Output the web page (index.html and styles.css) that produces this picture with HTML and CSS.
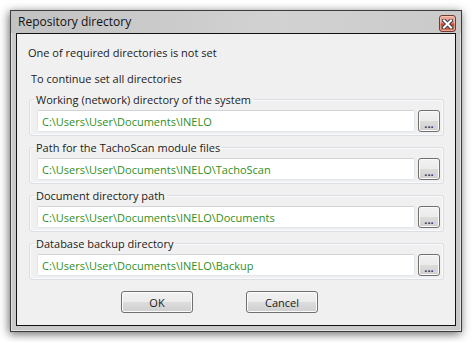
FILE: index.html
```html
<!DOCTYPE html>
<html lang="en">

<head>
    <meta charset="UTF-8" />
    <meta name="viewport" content="width=device-width, initial-scale=1.0" />
    <title>Repository directory</title>
    <link rel="stylesheet" href="styles.css">
</head>

<body>
    <!-- Dialog window -->
    <div class="window">
        <div class="titlebar">
            <span class="title">Repository directory</span>
            <button class="close" title="Close">
                <svg width="11" height="10" viewBox="0 0 11 10">
                    <path d="M2 1.5 L9 8.5 M9 1.5 L2 8.5" stroke="#3b3b4a" stroke-width="4" stroke-linecap="square" />
                    <path d="M2 1.5 L9 8.5 M9 1.5 L2 8.5" stroke="#ffffff" stroke-width="2" stroke-linecap="square" />
                </svg>
            </button>
        </div>

        <div class="client">
            <p class="msg">One of required directories is not set</p>
            <p class="hint">To continue set all directories</p>

            <fieldset class="group">
                <legend>Working (network) directory of the system</legend>
                <div class="row">
                    <input class="path" type="text" value="C:\Users\User\Documents\INELO" />
                    <button class="browse">...</button>
                </div>
            </fieldset>

            <fieldset class="group">
                <legend>Path for the TachoScan module files</legend>
                <div class="row">
                    <input class="path" type="text" value="C:\Users\User\Documents\INELO\TachoScan" />
                    <button class="browse">...</button>
                </div>
            </fieldset>

            <fieldset class="group">
                <legend>Document directory path</legend>
                <div class="row">
                    <input class="path" type="text" value="C:\Users\User\Documents\INELO\Documents" />
                    <button class="browse">...</button>
                </div>
            </fieldset>

            <fieldset class="group">
                <legend>Database backup directory</legend>
                <div class="row">
                    <input class="path" type="text" value="C:\Users\User\Documents\INELO\Backup" />
                    <button class="browse">...</button>
                </div>
            </fieldset>

            <div class="actions">
                <button class="btn">OK</button>
                <button class="btn">Cancel</button>
            </div>
        </div>
    </div>
</body>

</html>
```

FILE: styles.css
```css
* {
    box-sizing: border-box;
}

body {
    font-family: 'Open Sans', 'Noto Sans', sans-serif;
    font-size: 11px;
    color: #1b1b1b;
    margin: 0;
    padding: 10px;
    background: #ffffff;
}

.window {
    width: 452px;
    border: 1px solid #3d3d3d;
    background-color: #c9c9c9;
    padding: 0 5px 5px 5px;
    box-shadow: -1px 2px 9px rgba(0, 0, 0, 0.6), inset 0 0 0 1px #e2e2e2;
}

.titlebar {
    height: 22px;
    display: flex;
    justify-content: space-between;
    align-items: flex-start;
    margin: 0 -5px 0 -5px;
    padding: 0 5px 0 7px;
    background: linear-gradient(to right, #c2c2c2, #d2d2d2 60%, #cacaca);
}

.title {
    font-size: 12px;
    line-height: 22px;
    color: #111;
}

.close {
    width: 17px;
    height: 17px;
    margin-top: 4px;
    padding: 0;
    border: 1px solid #6e3c34;
    border-radius: 3px;
    background: linear-gradient(to bottom, #eeb0a0, #e08a72 45%, #c8492d 55%, #d6765a);
    display: flex;
    align-items: center;
    justify-content: center;
    box-shadow: inset 0 0 0 1px rgba(255, 220, 210, 0.5);
}

.client {
    border: 1px solid #111;
    background-color: #f0f0f0;
    padding: 11px 11px 12px 11px;
}

.msg {
    margin: 0;
    line-height: 15px;
}

.hint {
    margin: 11px 0 0 3px;
    line-height: 15px;
}

.group {
    margin: 6px 0 0 1px;
    padding: 3px 3px 3px 7px;
    border: 1px solid #d9dfe4;
    border-radius: 3px;
    box-shadow: inset 0 0 0 1px #fbfbfb;
}

.group + .group {
    margin-top: 4px;
}

.group legend {
    padding: 0 2px;
    margin-left: -3px;
    line-height: 15px;
    color: #1b1b1b;
}

.row {
    display: flex;
    gap: 3px;
}

.path {
    flex-grow: 1;
    height: 22px;
    padding: 0 4px;
    font-family: inherit;
    font-size: 11px;
    color: #2f8f1c;
    background: #ffffff;
    border: 1px solid #e2e7ec;
    border-top-color: #d0d4d9;
    border-radius: 2px;
    outline: none;
}

.browse,
.btn {
    font-family: inherit;
    font-size: 11px;
    color: #1b1b1b;
    border: 1px solid #707070;
    border-radius: 3px;
    background: linear-gradient(to bottom, #f2f2f2, #ebebeb 50%, #dddddd 50%, #cfcfcf);
    box-shadow: inset 0 0 0 1px #fbfbfb;
    padding: 0;
}

.browse {
    width: 22px;
    height: 22px;
    font-weight: bold;
    line-height: 22px;
    padding-top: 2px;
    color: #3c2a5c;
}

.actions {
    display: flex;
    gap: 53px;
    margin: 11px 0 0 93px;
}

.btn {
    width: 72px;
    height: 22px;
}
```
